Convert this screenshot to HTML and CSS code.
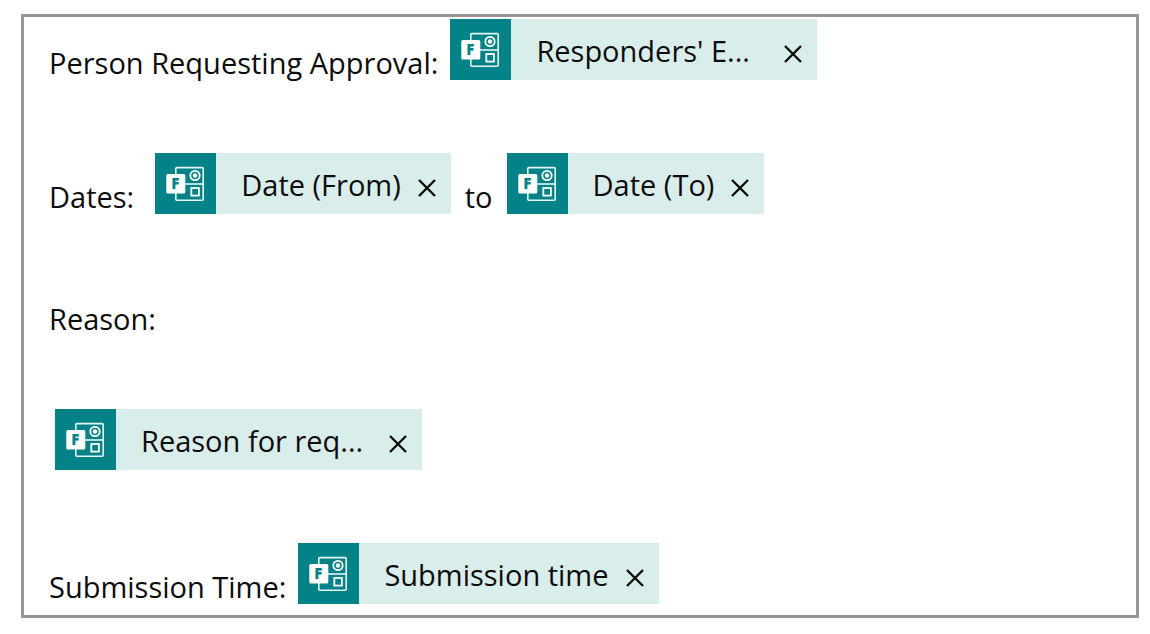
FILE: index.html
```html
<!DOCTYPE html>
<html lang="en">
<head>
  <meta charset="UTF-8" />
  <meta name="viewport" content="width=device-width, initial-scale=1.0" />
  <title>Approval Details</title>
  <link rel="stylesheet" href="styles.css">
</head>
<body>
  <!-- Forms icon, shared by every token -->
  <svg class="sprite" aria-hidden="true">
    <symbol id="forms" viewBox="0 0 61 61">
      <g fill="none" stroke="#e4f5f4" stroke-width="1.6">
        <rect x="20.8" y="14.6" width="27.4" height="32.6" rx="1" />
        <path d="M30 31H48" />
        <circle cx="40" cy="22.5" r="4.7" stroke="#fff" stroke-width="1.8" />
        <rect x="36.3" y="35" width="7.6" height="7.6" stroke="#fff" stroke-width="1.8" />
      </g>
      <circle cx="40" cy="22.5" r="2.2" fill="#fff" />
      <rect x="11.3" y="21" width="19" height="19.5" rx="1.5" fill="#fff" />
      <text x="16.2" y="36" class="icon-letter">F</text>
    </symbol>
  </svg>

  <div class="editor">
    <div class="row">
      <span class="label">Person Requesting Approval:</span>
      <span class="token">
        <svg class="icon"><use href="#forms" /></svg>
        <span class="name long">Responders' E...</span>
        <button class="remove" aria-label="Remove Responders' Email"><svg viewBox="0 0 18 18"><path d="M1 1L17 17M17 1L1 17" /></svg></button>
      </span>
    </div>

    <div class="row">
      <span class="label dates">Dates:</span>
      <span class="token">
        <svg class="icon"><use href="#forms" /></svg>
        <span class="name">Date (From)</span>
        <button class="remove" aria-label="Remove Date (From)"><svg viewBox="0 0 18 18"><path d="M1 1L17 17M17 1L1 17" /></svg></button>
      </span>
      <span class="label to">to</span>
      <span class="token">
        <svg class="icon"><use href="#forms" /></svg>
        <span class="name">Date (To)</span>
        <button class="remove" aria-label="Remove Date (To)"><svg viewBox="0 0 18 18"><path d="M1 1L17 17M17 1L1 17" /></svg></button>
      </span>
    </div>

    <div class="row">
      <span class="label">Reason:</span>
    </div>

    <div class="row start">
      <span class="token">
        <svg class="icon"><use href="#forms" /></svg>
        <span class="name long">Reason for req...</span>
        <button class="remove" aria-label="Remove Reason for request"><svg viewBox="0 0 18 18"><path d="M1 1L17 17M17 1L1 17" /></svg></button>
      </span>
    </div>

    <div class="row">
      <span class="label">Submission Time:</span>
      <span class="token">
        <svg class="icon"><use href="#forms" /></svg>
        <span class="name">Submission time</span>
        <button class="remove" aria-label="Remove Submission time"><svg viewBox="0 0 18 18"><path d="M1 1L17 17M17 1L1 17" /></svg></button>
      </span>
    </div>
  </div>
</body>
</html>
```
FILE: styles.css
```css
body {
  margin: 14px 11px 14px 21px;
  background: #fff;
  color: #0c0c0c;
  font-family: "Open Sans", "Noto Sans", sans-serif;
  font-size: 29px;
}
.sprite {
  display: none;
}
.editor {
  display: flex;
  flex-direction: column;
  gap: 73px;
  padding: 2px 25px 11px;
  border: 3px solid #979797;
}
.row {
  display: flex;
  align-items: flex-end;
  min-height: 49px;
}
.start {
  padding-left: 6px;
}
.label {
  margin-right: 12px;
  line-height: 34px;
  white-space: nowrap;
}
.dates {
  margin-right: 21px;
}
.to {
  margin: 0 14px;
}
.token {
  display: flex;
  align-items: center;
  height: 61px;
  background: #d9edeb;
}
.icon {
  width: 61px;
  height: 61px;
  margin-right: 25px;
  background: #038387;
}
.icon-letter {
  font-family: "Open Sans", sans-serif;
  font-size: 15px;
  font-weight: 800;
  fill: #038387;
}
.name {
  margin-right: 17px;
  padding-top: 2px;
  line-height: 40px;
  white-space: nowrap;
}
.long {
  width: 231px;
}
.remove {
  margin: 8px 15px 0 0;
  padding: 0;
  border: 0;
  background: none;
  cursor: pointer;
}
.remove svg {
  display: block;
  width: 18px;
  height: 18px;
  fill: none;
  stroke: #0c0c0c;
  stroke-width: 2.4;
}
```
